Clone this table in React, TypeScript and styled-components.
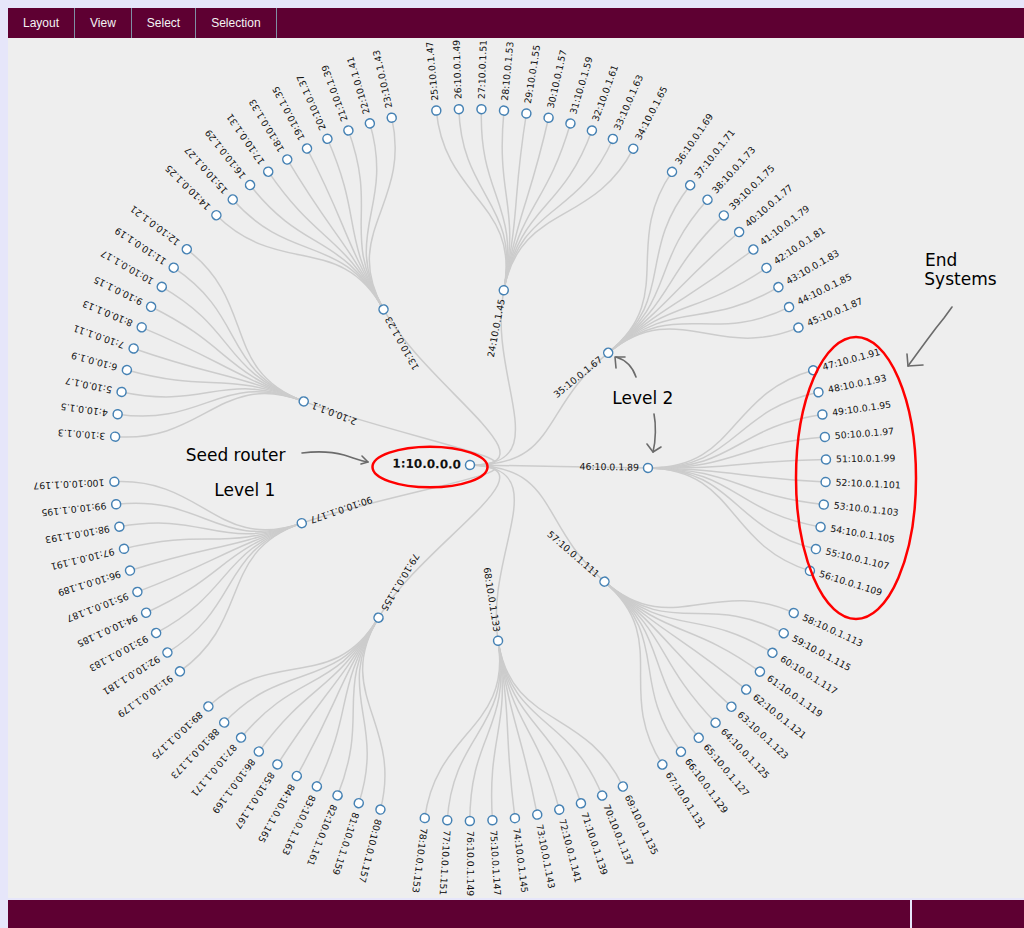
import React from 'react';
import styled, { createGlobalStyle } from 'styled-components';

// radial layout measured off the reference (page coordinates)
const CX = 470;
const CY = 465;
const R1 = 178;
const R2 = 356;
const START = 184.57;
const STEP = 360 / 99;

type TreeNode = { id: number; angle: number; r: number; depth: number };
type Link = { source: TreeNode; target: TreeNode };

function buildTree() {
  const root: TreeNode = { id: 1, angle: START + 48.5 * STEP - 360, r: 0, depth: 0 };
  const nodes: TreeNode[] = [root];
  const links: Link[] = [];
  for (let g = 0; g < 9; g++) {
    const pid = 2 + g * 11;
    const parent = { id: pid, angle: START + (11 * g + 4.5) * STEP, r: R1, depth: 1 };
    nodes.push(parent);
    links.push({ source: root, target: parent });
    for (let k = 0; k < 10; k++) {
      const leaf = { id: pid + 1 + k, angle: START + (11 * g + k) * STEP, r: R2, depth: 2 };
      nodes.push(leaf);
      links.push({ source: parent, target: leaf });
    }
  }
  return { nodes, links };
}

const polar = (a: number, r: number) => {
  const t = (a * Math.PI) / 180;
  return `${(CX + r * Math.cos(t)).toFixed(2)},${(CY + r * Math.sin(t)).toFixed(2)}`;
};

const diagonal = ({ source: s, target: t }: Link) => {
  const m = (s.r + t.r) / 2;
  return `M${polar(s.angle, s.r)}C${polar(s.angle, m)} ${polar(t.angle, m)} ${polar(t.angle, t.r)}`;
};

const label = (n: TreeNode) => (n.id === 1 ? '1:10.0.0.0' : `${n.id}:10.0.1.${2 * n.id - 3}`);

const { nodes, links } = buildTree();

const GlobalStyle = createGlobalStyle`
  body {
    margin: 8px 0 0 8px;
    background: #e6e6fa;
    font-family: "Liberation Sans", Arial, sans-serif;
    overflow: hidden;
  }
`;

const Frame = styled.div`
  display: flex;
  flex-direction: column;
  height: 920px;
`;

const MenuBar = styled.div`
  display: flex;
  height: 30px;
  background: #5e0032;
`;

const MenuItem = styled.div`
  padding: 0 15px;
  line-height: 30px;
  font-size: 12px;
  color: #f4f4f4;
  border-right: 1px solid #7f8fa3;
  cursor: pointer;
`;

const Canvas = styled.div`
  flex: 1;
  background: #eeeeee;
  margin-bottom: 2px;
  overflow: hidden;
`;

const Chart = styled.svg`
  display: block;
`;

const StatusBar = styled.div`
  display: flex;
  gap: 2px;
  height: 28px;
`;

const StatusCell = styled.div<{ $width?: number }>`
  background: #5e0032;
  ${(p) => (p.$width ? `width: ${p.$width}px;` : 'flex: 1;')}
`;

const Edge = styled.path`
  fill: none;
  stroke: #cccccc;
  stroke-width: 1.5px;
`;

const Dot = styled.circle`
  fill: #fff;
  stroke: #4682b4;
  stroke-width: 1.5px;
`;

const NodeLabel = styled.text<{ $root?: boolean }>`
  font-family: "DejaVu Sans", sans-serif;
  font-size: ${(p) => (p.$root ? '12px' : '9.3px')};
  font-weight: ${(p) => (p.$root ? 'bold' : 'normal')};
  fill: #111;
`;

const Note = styled.text`
  font-family: "DejaVu Sans", sans-serif;
  font-size: 17px;
  fill: #000;
`;

const Ring = styled.ellipse`
  fill: none;
  stroke: #ff0000;
  stroke-width: 2.5px;
`;

const Scribble = styled.path`
  fill: none;
  stroke: #6b6b6b;
  stroke-width: 1.6px;
  stroke-linecap: round;
  stroke-linejoin: round;
`;

function RadialTree() {
  return (
    <Chart width={1016} height={860} viewBox="8 38 1016 860">
      {links.map((l) => (
        <Edge key={l.target.id} d={diagonal(l)} />
      ))}
      {nodes.map((n) => (
        <g key={n.id} transform={`translate(${CX},${CY}) rotate(${n.angle.toFixed(3)}) translate(${n.r})`}>
          <Dot r={4.5} />
          <NodeLabel
            $root={n.depth === 0}
            x={n.depth === 2 ? 10 : -9}
            dy=".31em"
            textAnchor={n.depth === 2 ? 'start' : 'end'}
          >
            {label(n)}
          </NodeLabel>
        </g>
      ))}

      <Ring cx={430} cy={467} rx={57.5} ry={20.3} />
      <Ring cx={856} cy={478} rx={60} ry={141} />

      <Note x={185.7} y={461}>Seed router</Note>
      <Note x={214.3} y={495.7}>Level 1</Note>
      <Note x={612.3} y={404}>Level 2</Note>
      <Note x={925} y={265.7}>End</Note>
      <Note x={924.3} y={285}>Systems</Note>

      <Scribble d="M302 453 C318 451 333 452 344 455 C354 458 361 461 368 462" />
      <Scribble d="M362 456 L368 462 L361 464" />
      <Scribble d="M636 377 C633 368 626 360 616 357" />
      <Scribble d="M616 368 L615 357 L625 357" />
      <Scribble d="M654 414 C656 424 656 440 653 452" />
      <Scribble d="M647 444 L653 452 L661 447" />
      <Scribble d="M952 307 L944 318 L936 328 L927 340 L916 355 L908 366" />
      <Scribble d="M907 354 L908 366 L923 365" />
    </Chart>
  );
}

export default function App() {
  return (
    <>
      <GlobalStyle />
      <Frame>
        <MenuBar>
          <MenuItem>Layout</MenuItem>
          <MenuItem>View</MenuItem>
          <MenuItem>Select</MenuItem>
          <MenuItem>Selection</MenuItem>
        </MenuBar>
        <Canvas>
          <RadialTree />
        </Canvas>
        <StatusBar>
          <StatusCell />
          <StatusCell $width={112} />
        </StatusBar>
      </Frame>
    </>
  );
}
